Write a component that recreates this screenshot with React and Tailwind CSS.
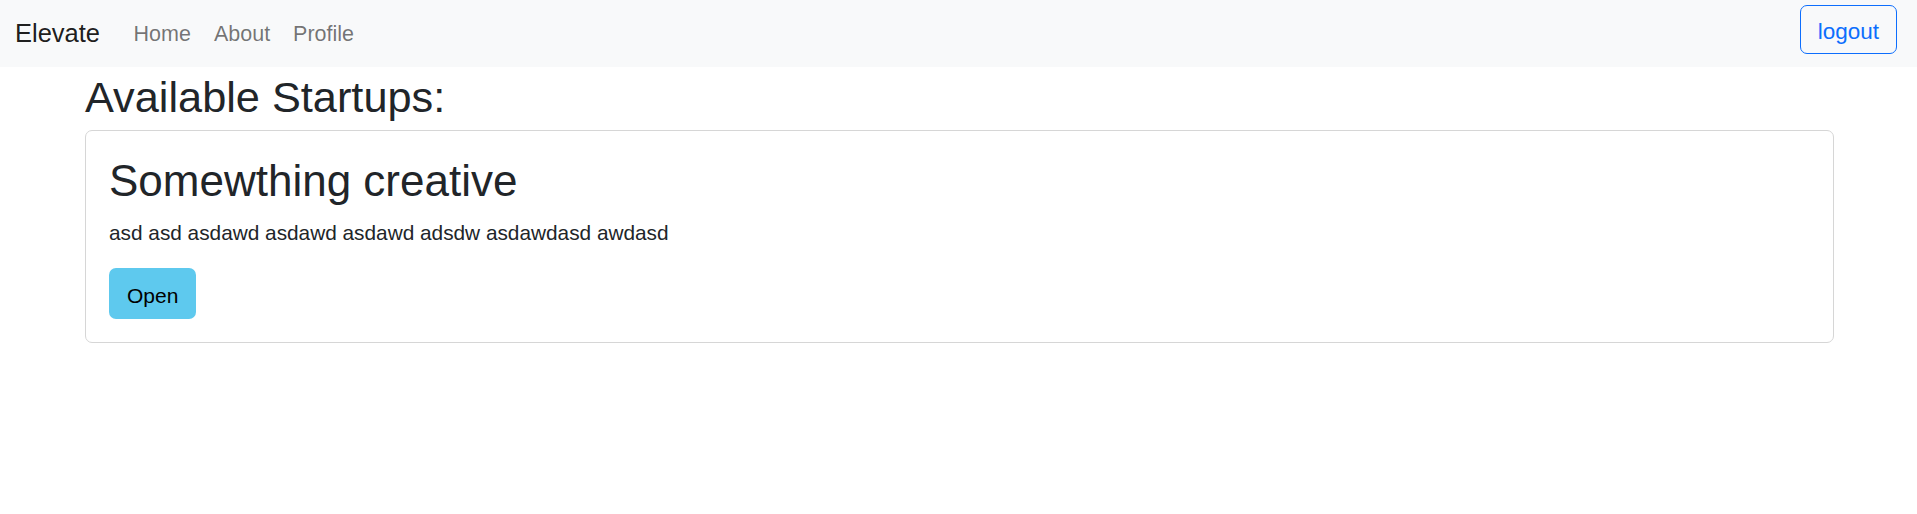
export default function App() {
  const startups = [
    {
      title: "Somewthing creative",
      description: "asd asd asdawd asdawd asdawd adsdw asdawdasd awdasd",
    },
  ];

  return (
    <div className="min-h-[514px] bg-white font-['Liberation_Sans',Arial,sans-serif] text-[#212529]">
      <nav className="flex h-[67px] items-center bg-[#f8f9fa] pl-[15px] pr-[20px]">
        <a href="#" className="mr-[22px] text-[25.5px] leading-[37px] text-black/90">
          Elevate
        </a>
        <div className="flex">
          <a href="#" className="px-[11.5px] text-[21.5px] leading-[32px] text-black/55">
            Home
          </a>
          <a href="#" className="px-[11.5px] text-[21.5px] leading-[32px] text-black/55">
            About
          </a>
          <a href="#" className="px-[11.5px] text-[21.5px] leading-[32px] text-black/55">
            Profile
          </a>
        </div>
        <button className="mb-auto ml-auto mt-[5px] rounded-[7px] border border-[#0d6efd] px-[17px] pb-[5px] pt-[9px] text-[22.5px] leading-[33px] text-[#0d6efd]">
          logout
        </button>
      </nav>

      <div className="pl-[85px] pr-[83px]">
        <h1 className="mb-[7px] mt-[4px] text-[43.3px] leading-[52px]">Available Startups:</h1>
        {startups.map((s) => (
          <div key={s.title} className="rounded-[7px] border border-[#d6d6d6] p-[23px]">
            <h2 className="mb-[10px] text-[44px] leading-[53px]">{s.title}</h2>
            <p className="mb-[20px] text-[20.8px] leading-[31px]">{s.description}</p>
            <button className="rounded-[7px] bg-[#5ec9ee] px-[18px] pb-[7px] pt-[12px] text-[21px] leading-[32px] text-black">
              Open
            </button>
          </div>
        ))}
      </div>
    </div>
  );
}
